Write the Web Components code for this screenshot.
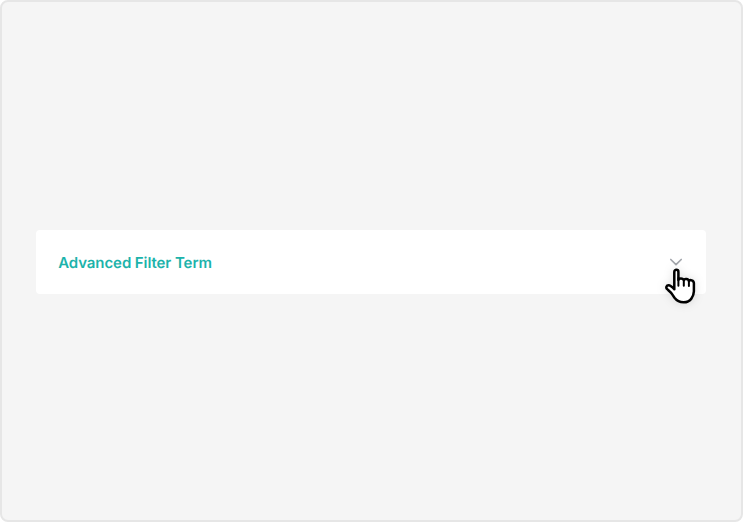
<!DOCTYPE html>
<html lang="en">
<head>
<meta charset="utf-8">
<title>Advanced filter</title>
<style>body{margin:0;font-family:Inter,"Liberation Sans",sans-serif}</style>
</head>
<body>
<filter-stage><filter-accordion>Advanced Filter Term</filter-accordion></filter-stage>
<script>
customElements.define('filter-stage', class extends HTMLElement {
  constructor() {
    super();
    this.attachShadow({mode: 'open'}).innerHTML = `
      <style>
        :host{display:flex;align-items:center;box-sizing:border-box;width:743px;height:522px;padding:2px 35px 0 34px;background:#f5f5f5;border:2px solid #e6e6e6;border-radius:8px}
      </style><slot></slot>`;
  }
});
customElements.define('chevron-icon', class extends HTMLElement {
  constructor() {
    super();
    this.attachShadow({mode: 'open'}).innerHTML = `
      <style>:host,svg{display:block;width:16px;height:16px}</style>
      <svg viewBox="0 0 16 16" fill="none" stroke="#a3a6ac" stroke-width="1.7" stroke-linecap="round" stroke-linejoin="round"><path d="M2.8 5.5 8 10.7l5.2-5.2"/></svg>`;
  }
});
customElements.define('hand-pointer', class extends HTMLElement {
  constructor() {
    super();
    this.attachShadow({mode: 'open'}).innerHTML = `
      <style>
        :host{display:block;width:36px;height:40px}
        svg{display:block;overflow:visible;filter:drop-shadow(0 0 5px rgba(0,0,0,.13))}
      </style>
      <svg width="36" height="40" viewBox="0 0 36 40" fill="#fff" stroke="#000" stroke-width="2.5" stroke-linecap="round" stroke-linejoin="round">
        <path d="M12.3 24.3V6.9a2.05 2.05 0 0 1 4.1 0v8.1c0-1.8 4.7-2.1 5.4.2.5-2 4.7-1.6 5.1.8.9-1.6 5-.8 5 2.2v8c0 3.1-1 5.1-2.6 7.5-1.8 2.7-4.1 3.6-7.7 3.6-4.5 0-6.8-1.5-9.1-4.6l-2.6-3.8c-1.2-1.7-2.9-3-4.7-4.7-1.7-1.7-.7-4 1.3-4 2 0 4 1.9 5.8 4.1"/>
        <path d="M16.4 13v7.7M21.8 15.2v5.5M26.9 16v4.9" stroke-width="2"/>
      </svg>`;
  }
});
customElements.define('filter-accordion', class extends HTMLElement {
  constructor() {
    super();
    this.attachShadow({mode: 'open'}).innerHTML = `
      <style>
        :host{position:relative;display:flex;align-items:center;justify-content:space-between;box-sizing:border-box;width:670px;height:64px;padding:0 22px 0 22.2px;background:#fff;border-radius:4px}
        .label{font-size:15px;font-weight:600;line-height:24px;letter-spacing:-.08px;color:#1cb3ab;padding-top:1px;white-space:nowrap;text-rendering:geometricPrecision}
        hand-pointer{position:absolute;left:626px;top:35px}
      </style>
      <span class="label"><slot></slot></span><chevron-icon></chevron-icon><hand-pointer></hand-pointer>`;
  }
});
</script>
</body>
</html>
